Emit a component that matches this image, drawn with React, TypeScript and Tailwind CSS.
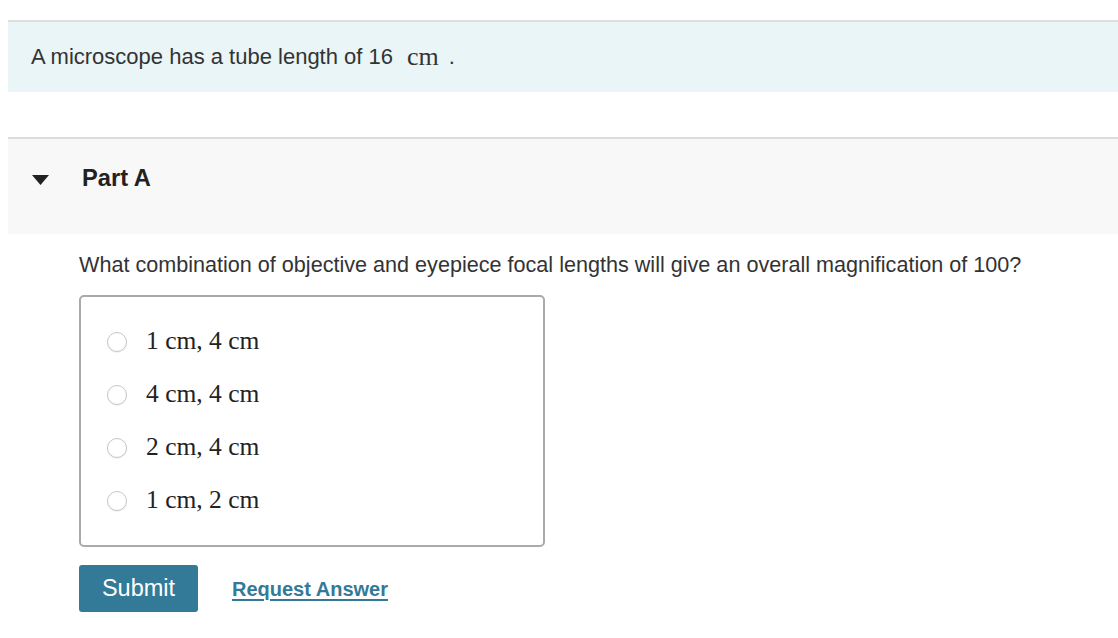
import React from "react";

const options = ["1 cm, 4 cm", "4 cm, 4 cm", "2 cm, 4 cm", "1 cm, 2 cm"];

function Radio() {
  return (
    <span className="inline-block h-[20px] w-[20px] shrink-0 rounded-full border border-[#c6c6c6] bg-white shadow-[0_1px_1px_rgba(0,0,0,0.06)]" />
  );
}

export default function App() {
  return (
    <main className="min-h-screen bg-white pl-[8px] pt-[20px] font-['Liberation_Sans',Arial,sans-serif] text-[#333]">
      <section className="flex h-[72px] items-center border-t-2 border-[#dddddd] bg-[#e9f5f7] pl-[23px] pb-[2px] text-[22px]">
        <span>A microscope has a tube length of 16</span>
        <span className="ml-[14px] font-['Liberation_Serif',serif] text-[26px]">cm</span>
        <span className="ml-[10px]">.</span>
      </section>

      <section className="mt-[45px] flex h-[97px] items-center border-t-2 border-[#dddddd] bg-[#f8f8f8] pl-[24px] pb-[16px]">
        <svg width="17" height="10" viewBox="0 0 17 10" className="mt-[2px]">
          <path d="M0 0 H17 L8.5 10 Z" fill="#222" />
        </svg>
        <h2 className="ml-[33px] text-[23.7px] font-bold text-[#222]">Part A</h2>
      </section>

      <section className="pl-[71px]">
        <p className="mt-[19px] text-[21.6px] leading-[24px]">
          What combination of objective and eyepiece focal lengths will give an overall magnification of 100?
        </p>

        <div className="mt-[18px] flex h-[252px] w-[466px] flex-col gap-[32px] rounded-[5px] border-2 border-[#aaaaaa] pl-[26px] pt-[34px]">
          {options.map((o) => (
            <label key={o} className="flex h-[21px] items-center gap-[19px]">
              <Radio />
              <span className="font-['Liberation_Serif',serif] text-[25.5px] text-[#222]">{o}</span>
            </label>
          ))}
        </div>

        <div className="mt-[18px] flex items-center gap-[34px] pb-[20px]">
          <button
            type="button"
            className="h-[47px] w-[119px] rounded-[3px] bg-[#337a99] text-[23.5px] text-white"
          >
            Submit
          </button>
          <a href="#" className="text-[20px] font-bold text-[#337a99] underline underline-offset-[3px]">
            Request Answer
          </a>
        </div>
      </section>
    </main>
  );
}
